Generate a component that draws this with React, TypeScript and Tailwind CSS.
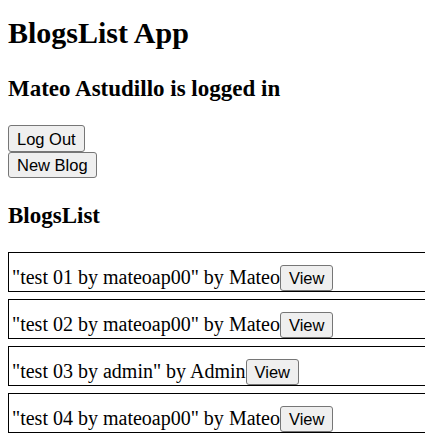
import React from 'react';

type Blog = {
  id: number;
  title: string;
  author: string;
};

const blogs: Blog[] = [
  { id: 1, title: 'test 01 by mateoap00', author: 'Mateo' },
  { id: 2, title: 'test 02 by mateoap00', author: 'Mateo' },
  { id: 3, title: 'test 03 by admin', author: 'Admin' },
  { id: 4, title: 'test 04 by mateoap00', author: 'Mateo' },
];

// boton con el aspecto por defecto del navegador
const Button: React.FC<{ label: string; className?: string }> = ({ label, className = '' }) => (
  <button
    className={`inline-block px-[8px] leading-[18px] text-[16.5px] font-['Liberation_Sans',Arial,sans-serif] text-black bg-[#efefef] border border-solid border-[#767676] rounded-[3px] ${className}`}
  >
    {label}
  </button>
);

const BlogItem: React.FC<{ blog: Blog }> = ({ blog }) => (
  <div className="w-[460px] flex items-baseline border border-solid border-black pt-[12px] pl-[3px] mb-[7px] text-[20px] leading-[23px]">
    <span>"{blog.title}" by {blog.author}</span>
    <Button label="View" className="h-[26px]" />
  </div>
);

const App: React.FC = () => {
  return (
    <div className="w-[425px] h-[436px] overflow-hidden bg-white text-black font-['Liberation_Serif','Times_New_Roman',serif]">
      <div className="px-2">
        <h1 className="mt-[15px] text-[30px] leading-[36px] font-bold">BlogsList App</h1>
        <h2 className="mt-[24px] text-[23px] leading-[27px] font-bold">Mateo Astudillo is logged in</h2>

        <div className="mt-[23px]">
          <div className="flex">
            <Button label="Log Out" className="h-[27px]" />
          </div>
          <div className="flex">
            <Button label="New Blog" className="h-[26px]" />
          </div>
        </div>

        <h2 className="mt-[24px] text-[23px] leading-[27px] font-bold">BlogsList</h2>

        {/* Lista de blogs */}
        <div className="mt-[23px]">
          {blogs.map((blog, index) => (
            <div key={blog.id} className={index === 2 ? 'mb-[1px]' : ''}>
              <BlogItem blog={blog} />
            </div>
          ))}
        </div>
      </div>
    </div>
  );
};

export default App;
